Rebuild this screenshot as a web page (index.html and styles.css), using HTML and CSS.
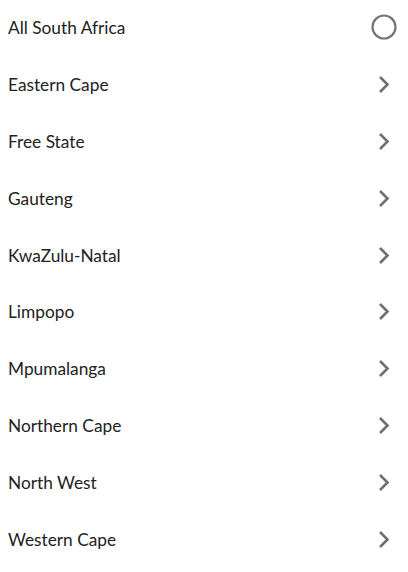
FILE: index.html
```html
<!DOCTYPE html>
<html>
<head>
<meta charset="utf-8">
<link rel="stylesheet" href="styles.css">
</head>
<body>
<ul class="list">
  <li class="row"><span class="label">All South Africa</span><svg class="icon" viewBox="0 0 30 30"><circle cx="15" cy="14" r="11.5" fill="none" stroke="#757575" stroke-width="2.2"/></svg></li>
  <li class="row"><span class="label">Eastern Cape</span><svg class="icon" viewBox="0 0 30 30"><polyline points="11,7 18.5,14.5 11,22" fill="none" stroke="#6f6f6f" stroke-width="2.6"/></svg></li>
  <li class="row"><span class="label">Free State</span><svg class="icon" viewBox="0 0 30 30"><polyline points="11,7 18.5,14.5 11,22" fill="none" stroke="#6f6f6f" stroke-width="2.6"/></svg></li>
  <li class="row"><span class="label">Gauteng</span><svg class="icon" viewBox="0 0 30 30"><polyline points="11,7 18.5,14.5 11,22" fill="none" stroke="#6f6f6f" stroke-width="2.6"/></svg></li>
  <li class="row"><span class="label">KwaZulu-Natal</span><svg class="icon" viewBox="0 0 30 30"><polyline points="11,7 18.5,14.5 11,22" fill="none" stroke="#6f6f6f" stroke-width="2.6"/></svg></li>
  <li class="row"><span class="label">Limpopo</span><svg class="icon" viewBox="0 0 30 30"><polyline points="11,7 18.5,14.5 11,22" fill="none" stroke="#6f6f6f" stroke-width="2.6"/></svg></li>
  <li class="row"><span class="label">Mpumalanga</span><svg class="icon" viewBox="0 0 30 30"><polyline points="11,7 18.5,14.5 11,22" fill="none" stroke="#6f6f6f" stroke-width="2.6"/></svg></li>
  <li class="row"><span class="label">Northern Cape</span><svg class="icon" viewBox="0 0 30 30"><polyline points="11,7 18.5,14.5 11,22" fill="none" stroke="#6f6f6f" stroke-width="2.6"/></svg></li>
  <li class="row"><span class="label">North West</span><svg class="icon" viewBox="0 0 30 30"><polyline points="11,7 18.5,14.5 11,22" fill="none" stroke="#6f6f6f" stroke-width="2.6"/></svg></li>
  <li class="row"><span class="label">Western Cape</span><svg class="icon" viewBox="0 0 30 30"><polyline points="11,7 18.5,14.5 11,22" fill="none" stroke="#6f6f6f" stroke-width="2.6"/></svg></li>
</ul>
</body>
</html>
```
FILE: styles.css
```css
html, body {
  margin: 0;
  padding: 0;
  background: #ffffff;
}
body {
  font-family: Lato, "Open Sans", sans-serif;
  color: #222222;
}
.list {
  list-style: none;
  margin: 0;
  padding: 0;
}
.row {
  display: flex;
  align-items: center;
  justify-content: space-between;
  height: 56.8px;
  padding: 0 9px 0 8px;
}
.label {
  font-size: 17.3px;
  line-height: 20px;
}
.icon {
  width: 30px;
  height: 30px;
  display: block;
}
```
